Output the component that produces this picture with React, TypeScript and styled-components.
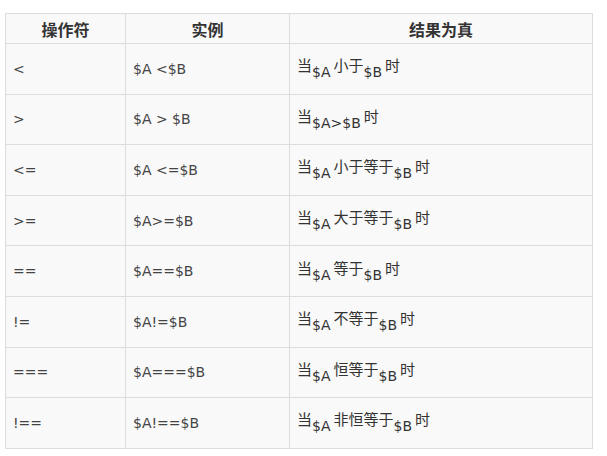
import React from "react";
import styled, { createGlobalStyle } from "styled-components";

const GlobalStyle = createGlobalStyle`
  html, body {
    margin: 0;
    background: #fff;
  }
  body {
    padding: 13px 0 0 5px;
    font-family: "DejaVu Sans", "Noto Sans CJK SC", sans-serif;
    color: #333;
  }
`;

const Table = styled.table`
  border-collapse: collapse;
  width: 587px;
  table-layout: fixed;
  background: #f9f9f9;
  font-size: 14px;
  line-height: 20px;
`;

const Col = styled.col<{ w: number }>`
  width: ${(p) => p.w}px;
`;

const Head = styled.th`
  height: 29px;
  padding: 0;
  border: 1px solid #ddd;
  font-family: "Noto Sans CJK SC", sans-serif;
  font-size: 16px;
  font-weight: 700;
  text-align: center;
  color: #333;
`;

const Cell = styled.td`
  height: 49.6px;
  padding: 0 7px;
  border: 1px solid #ddd;
  vertical-align: middle;
  color: #444;
  white-space: nowrap;
`;

const Result = styled(Cell)`
  font-family: "Noto Sans CJK SC", sans-serif;
  font-size: 15px;
  color: #333;
`;

const Sub = styled.span`
  font-family: "DejaVu Sans", sans-serif;
  font-size: 14px;
  vertical-align: -6px;
  margin-right: 3px;
`;

type Row = { op: string; example: string; parts: (string | { v: string })[] };

const rows: Row[] = [
  { op: "<", example: "$A <$B", parts: ["当", { v: "$A" }, "小于", { v: "$B" }, "时"] },
  { op: ">", example: "$A > $B", parts: ["当", { v: "$A>$B" }, "时"] },
  { op: "<=", example: "$A <=$B", parts: ["当", { v: "$A" }, "小于等于", { v: "$B" }, "时"] },
  { op: ">=", example: "$A>=$B", parts: ["当", { v: "$A" }, "大于等于", { v: "$B" }, "时"] },
  { op: "==", example: "$A==$B", parts: ["当", { v: "$A" }, "等于", { v: "$B" }, "时"] },
  { op: "!=", example: "$A!=$B", parts: ["当", { v: "$A" }, "不等于", { v: "$B" }, "时"] },
  { op: "===", example: "$A===$B", parts: ["当", { v: "$A" }, "恒等于", { v: "$B" }, "时"] },
  { op: "!==", example: "$A!==$B", parts: ["当", { v: "$A" }, "非恒等于", { v: "$B" }, "时"] },
];

export default function App() {
  return (
    <>
      <GlobalStyle />
      <Table>
        <colgroup>
          <Col w={120} />
          <Col w={164} />
          <Col w={303} />
        </colgroup>
        <thead>
          <tr>
            <Head>操作符</Head>
            <Head>实例</Head>
            <Head>结果为真</Head>
          </tr>
        </thead>
        <tbody>
          {rows.map((r) => (
            <tr key={r.op}>
              <Cell>{r.op}</Cell>
              <Cell>{r.example}</Cell>
              <Result>
                {r.parts.map((p, i) =>
                  typeof p === "string" ? (
                    <span key={i}>{p}</span>
                  ) : (
                    <Sub key={i}>{p.v}</Sub>
                  )
                )}
              </Result>
            </tr>
          ))}
        </tbody>
      </Table>
    </>
  );
}
